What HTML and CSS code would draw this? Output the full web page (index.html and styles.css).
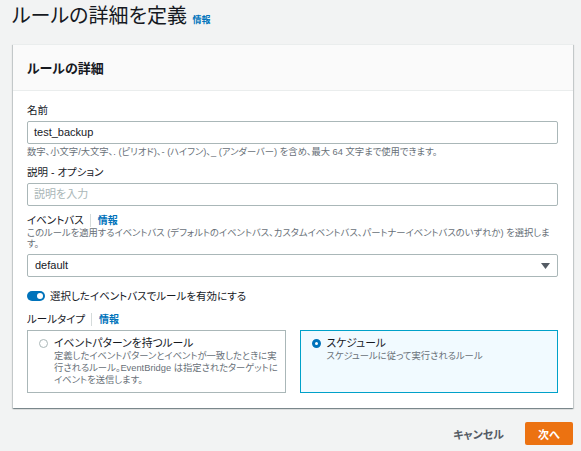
FILE: index.html
```
<!DOCTYPE html>
<html lang="ja">
<head>
    <meta charset="UTF-8">
    <title>ルールの詳細を定義</title>
    <link rel="stylesheet" href="styles.css">
</head>
<body>
    <div class="page">
        <h1 class="page-title">ルールの詳細を定義 <a class="info-link" href="#">情報</a></h1>

        <div class="panel">
            <div class="panel-header">
                <h2>ルールの詳細</h2>
            </div>
            <div class="panel-body">
                <div class="field">
                    <div class="field-label">名前</div>
                    <div class="text-input">test_backup</div>
                    <div class="hint hint-below">数字、小文字/大文字、. (ピリオド)、- (ハイフン)、_ (アンダーバー) を含め、最大 64 文字まで使用できます。</div>
                </div>

                <div class="field">
                    <div class="field-label">説明 - オプション</div>
                    <div class="text-input placeholder">説明を入力</div>
                </div>

                <div class="field">
                    <div class="field-label">イベントバス<span class="sep"></span><a class="info-link" href="#">情報</a></div>
                    <div class="hint">このルールを適用するイベントバス (デフォルトのイベントバス、カスタムイベントバス、パートナーイベントバスのいずれか) を選択します。</div>
                    <div class="select">
                        <span>default</span>
                        <svg class="caret" width="9" height="6" viewBox="0 0 9 6"><path d="M0 0h9L4.5 6z" fill="#545b64"/></svg>
                    </div>
                </div>

                <div class="toggle-row">
                    <span class="toggle"><span class="knob"></span></span>
                    <span>選択したイベントバスでルールを有効にする</span>
                </div>

                <div class="field field-last">
                    <div class="field-label">ルールタイプ<span class="sep"></span><a class="info-link" href="#">情報</a></div>
                    <div class="tiles">
                        <div class="tile">
                            <span class="radio"></span>
                            <div class="tile-text">
                                <div class="tile-title">イベントパターンを持つルール</div>
                                <div class="tile-desc">定義したイベントパターンとイベントが一致したときに実行されるルール。EventBridge は指定されたターゲットにイベントを送信します。</div>
                            </div>
                        </div>
                        <div class="tile selected">
                            <span class="radio"></span>
                            <div class="tile-text">
                                <div class="tile-title">スケジュール</div>
                                <div class="tile-desc">スケジュールに従って実行されるルール</div>
                            </div>
                        </div>
                    </div>
                </div>
            </div>
        </div>

        <div class="actions">
            <a class="cancel" href="#">キャンセル</a>
            <button class="primary">次へ</button>
        </div>
    </div>
</body>
</html>
```

FILE: styles.css
```
body {
    margin: 0;
    background: #f2f3f3;
    color: #16191f;
    font-family: "Liberation Sans", "Noto Sans CJK JP", sans-serif;
    font-feature-settings: "palt";
}
.page {
    padding: 0 8px 0 13px;
}
.page-title {
    margin: 0 0 12px -1px;
    height: 32px;
    font-size: 20px;
    font-weight: normal;
    line-height: 32px;
}
.info-link {
    color: #0073bb;
    font-size: 10px;
    font-weight: bold;
    line-height: 1;
    text-decoration: none;
}
.page-title .info-link {
    font-size: 9px;
}
.panel {
    background: #fff;
    border-top: 1px solid #eaeded;
    box-shadow: 0 1px 1px 0 rgba(0, 28, 36, 0.3), 1px 1px 1px 0 rgba(0, 28, 36, 0.15), -1px 1px 1px 0 rgba(0, 28, 36, 0.15);
}
.panel-header {
    background: #fafafa;
    border-bottom: 1px solid #eaeded;
    height: 45px;
    display: flex;
    align-items: center;
    padding: 0 14px;
}
.panel-header h2 {
    margin: 0;
    font-size: 13px;
    font-weight: bold;
}
.panel-body {
    padding: 12px 15px 15px 14px;
}
.field {
    margin-bottom: 7px;
}
.field-last {
    margin-bottom: 0;
}
.field-label {
    font-size: 10.5px;
    line-height: 15px;
    height: 15px;
    margin-bottom: 3px;
}
.sep {
    display: inline-block;
    vertical-align: middle;
    width: 1px;
    height: 13px;
    background: #d5dbdb;
    margin: -2px 7px 0 6px;
}
.text-input,
.select {
    box-sizing: border-box;
    height: 23px;
    border: 1px solid #aab7b8;
    border-radius: 2px;
    padding: 0 6px;
    font-size: 11px;
    line-height: 21px;
}
.placeholder {
    color: #aab7b8;
}
.hint {
    color: #687078;
    font-size: 9.3px;
    line-height: 11px;
    margin-bottom: 4px;
    margin-top: -3px;
}
.hint-below {
    margin: 3px 0 0;
}
.select {
    display: flex;
    justify-content: space-between;
    align-items: center;
    padding: 0 7px;
}
.toggle-row {
    display: flex;
    align-items: center;
    font-size: 10.5px;
    line-height: 16px;
    margin: 11px 0 8px;
}
.toggle {
    width: 18px;
    height: 10px;
    border-radius: 5px;
    background: #0073bb;
    margin-right: 5px;
    position: relative;
}
.knob {
    position: absolute;
    right: 2px;
    top: 2px;
    width: 6px;
    height: 6px;
    border-radius: 50%;
    background: #fff;
}
.tiles {
    display: grid;
    grid-template-columns: 1fr 1fr;
    gap: 14px;
}
.tile {
    display: flex;
    align-items: flex-start;
    border: 1px solid #aab7b8;
    padding: 5px 4px 6px 11px;
}
.tile.selected {
    background: #f1faff;
    border-color: #00a1c9;
}
.radio {
    box-sizing: border-box;
    flex: none;
    width: 9px;
    height: 9px;
    border-radius: 50%;
    border: 1px solid #aab7b8;
    margin: 3px 6px 0 0;
}
.selected .radio {
    border: 3px solid #0073bb;
    background: #fff;
}
.tile-title {
    font-size: 10.8px;
    line-height: 14px;
}
.tile-desc {
    color: #687078;
    font-size: 9.3px;
    line-height: 12px;
}
.actions {
    display: flex;
    justify-content: flex-end;
    align-items: center;
    margin-top: 14px;
}
.cancel {
    color: #545b64;
    font-size: 11px;
    font-weight: bold;
    text-decoration: none;
    margin-right: 21px;
}
.primary {
    background: #ec7211;
    color: #fff;
    border: none;
    border-radius: 2px;
    font-family: inherit;
    font-size: 11px;
    font-weight: bold;
    height: 23px;
    padding: 0 13px;
}
```
